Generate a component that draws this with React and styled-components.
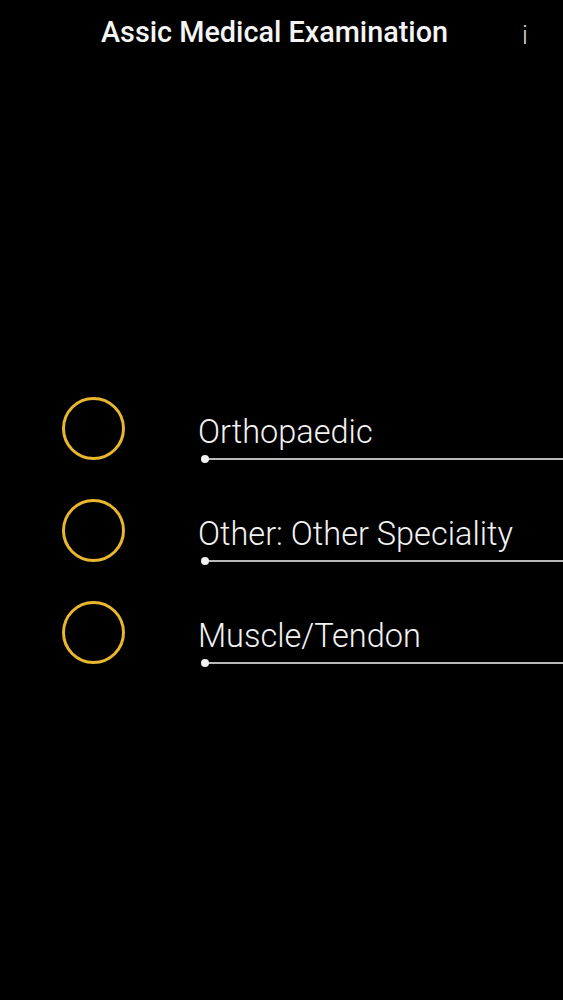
import React from "react";
import styled, { createGlobalStyle } from "styled-components";

const items = ["Orthopaedic", "Other: Other Speciality", "Muscle/Tendon"];

const GlobalStyle = createGlobalStyle`
  html, body {
    margin: 0;
    padding: 0;
    background: #000;
  }
`;

const Screen = styled.div`
  width: 563px;
  height: 1000px;
  background: #000;
  color: #fff;
  font-family: "Roboto", "Liberation Sans", sans-serif;
  overflow: hidden;
`;

const Header = styled.div`
  height: 64px;
  display: flex;
  align-items: center;
  padding: 0 0 0 101px;
`;

const Title = styled.h1`
  margin: 0;
  flex: 1;
  font-size: 28.8px;
  font-weight: 500;
  color: #f4f4f4;
`;

const InfoButton = styled.span`
  width: 38px;
  margin-right: 19px;
  text-align: center;
  font-size: 26px;
  font-weight: 300;
  color: #dcdcdc;
  padding-top: 6px;
`;

const List = styled.ul`
  list-style: none;
  margin: 0;
  padding: 333px 0 0 0;
`;

const Row = styled.li`
  height: 102px;
  display: flex;
  align-items: flex-start;
`;

const Ring = styled.div`
  width: 57px;
  height: 57px;
  margin: 0 74px 0 62px;
  border: 3px solid #e9b72e;
  border-radius: 50%;
  flex-shrink: 0;
`;

const Body = styled.div`
  flex: 1;
  padding-top: 17px;
`;

const Label = styled.div`
  font-size: 32.5px;
  font-weight: 300;
  line-height: 36px;
  color: #f2f2f2;
  margin-left: -1px;
`;

const Track = styled.div`
  position: relative;
  height: 2px;
  margin: 8px 0 0 6px;
  background: #b8b8b8;

  &::before {
    content: "";
    position: absolute;
    left: -4px;
    top: -3px;
    width: 8px;
    height: 8px;
    border-radius: 50%;
    background: #f2f2f2;
  }
`;

export default function App() {
  return (
    <Screen>
      <GlobalStyle />
      <Header>
        <Title>Assic Medical Examination</Title>
        <InfoButton>i</InfoButton>
      </Header>
      <List>
        {items.map((item) => (
          <Row key={item}>
            <Ring />
            <Body>
              <Label>{item}</Label>
              <Track />
            </Body>
          </Row>
        ))}
      </List>
    </Screen>
  );
}
